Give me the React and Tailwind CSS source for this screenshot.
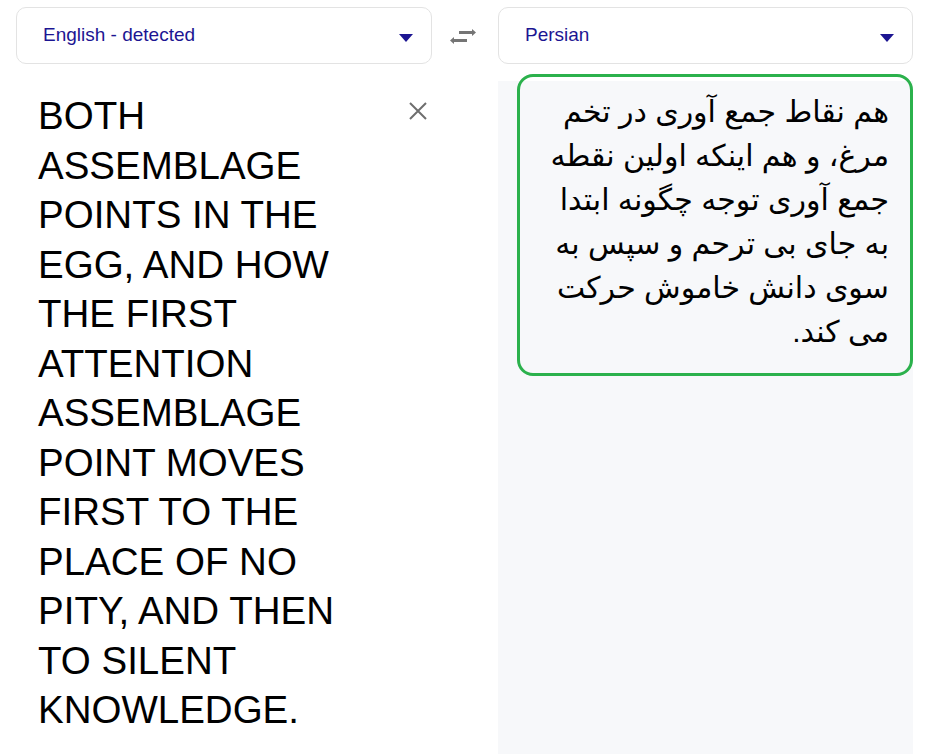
import React from "react";

function Caret() {
  return (
    <svg width="14" height="8" viewBox="0 0 14 8" className="shrink-0 mt-[4px]">
      <path d="M0 0 L14 0 L7 8 Z" fill="#1c1592" />
    </svg>
  );
}

function LangSelect({ label, className }) {
  return (
    <div
      className={
        "h-[57px] flex items-center justify-between pl-[26px] pr-[18px] border border-[#e3e3e3] rounded-[10px] bg-white " +
        className
      }
    >
      <span className="text-[19px] text-[#1c1592]">{label}</span>
      <Caret />
    </div>
  );
}

function SwapIcon() {
  return (
    <svg width="26" height="20" viewBox="0 0 26 20" className="mr-[5px] mt-[2px]">
      <g fill="#757575">
        <path d="M9 4 H22 V2 L26 5.5 L22 9 V7 H9 Z" />
        <path d="M17 12 H4 V10 L0 13.5 L4 17 V15 H17 Z" />
      </g>
    </svg>
  );
}

export default function App() {
  return (
    <div
      className="w-[947px] h-[754px] overflow-hidden bg-white"
      style={{ fontFamily: '"Liberation Sans", Arial, "DejaVu Sans", sans-serif' }}
    >
      <div className="flex items-center pt-[7px] pl-[16px]">
        <LangSelect label="English - detected" className="w-[416px]" />
        <div className="w-[66px] flex justify-center">
          <SwapIcon />
        </div>
        <LangSelect label="Persian" className="w-[415px]" />
      </div>

      <div className="flex mt-[16px] pl-[16px]">
        <div className="w-[416px] relative pl-[22px] pt-[11px]">
          <p className="w-[335px] text-[38.5px] leading-[49.5px] text-black">
            BOTH ASSEMBLAGE POINTS IN THE EGG, AND HOW THE FIRST ATTENTION
            ASSEMBLAGE POINT MOVES FIRST TO THE PLACE OF NO PITY, AND THEN TO
            SILENT KNOWLEDGE.
          </p>
          <svg
            className="absolute left-[393px] top-[22px]"
            width="18"
            height="18"
            viewBox="0 0 18 18"
          >
            <path
              d="M1 1 L17 17 M17 1 L1 17"
              stroke="#6e6e6e"
              strokeWidth="2"
            />
          </svg>
        </div>
        <div className="w-[66px]" />
        <div className="w-[415px] h-[700px] mt-[1px] bg-[#f7f8fa]">
          <div
            dir="rtl"
            className="-mt-[7px] ml-[19px] h-[302px] border-[3px] border-[#2bb14c] rounded-[16px] pr-[21px] pl-[8px] pt-[13px] text-[30px] leading-[44px] text-black text-right"
          >
            هم نقاط جمع آوری در تخم مرغ، و هم اینکه اولین نقطه جمع آوری توجه
            چگونه ابتدا به جای بی ترحم و سپس به سوی دانش خاموش حرکت می کند.
          </div>
        </div>
      </div>
    </div>
  );
}
